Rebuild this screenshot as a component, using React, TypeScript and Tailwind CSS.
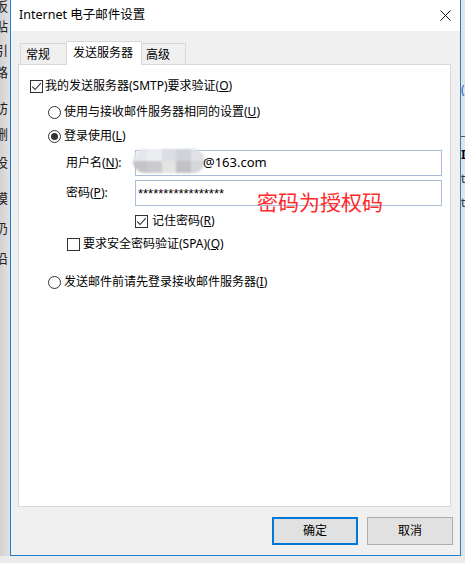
import React from 'react'

const ui = "font-['Noto_Sans','Noto_Sans_CJK_SC',sans-serif]"

const Check = ({ checked }: { checked?: boolean }) => (
  <span className="w-[13px] h-[13px] border border-[#333] bg-white flex items-center justify-center shrink-0">
    {checked && (
      <svg width="11" height="11" viewBox="0 0 11 11">
        <path d="M1.2 5.6 L4.1 8.5 L9.8 2.2" fill="none" stroke="#333" strokeWidth="1.1" />
      </svg>
    )}
  </span>
)

const Radio = ({ on }: { on?: boolean }) => (
  <span className="w-[13px] h-[13px] rounded-full border border-[#333] bg-white flex items-center justify-center shrink-0">
    {on && <span className="w-[7px] h-[7px] rounded-full bg-[#333]" />}
  </span>
)

// bits of the window behind the dialog
const leftBits = [
  ['扳', 12, 0],
  ['贴', 14, 8],
  ['引', 14, 10],
  ['路', 16, 8],
  ['纺', 14, 20],
  ['删', 14, 12],
  ['设', 14, 14],
  ['模', 14, 22],
  ['扔', 14, 16],
  ['沿', 14, 16],
  [']', 14, 50],
]

const App = () => {
  return (
    <div className={`w-[465px] h-[563px] bg-[#ebebeb] flex overflow-hidden text-[#000] ${ui}`}>
      <div className="w-[10px] h-[556px] bg-gradient-to-r from-[#d2d2d2] to-[#e2e2e2] flex flex-col overflow-hidden">
        {leftBits.map(([c, h, m], i) => (
          <div
            key={i}
            className="text-[13px] leading-none text-[#222] -ml-[5px] whitespace-nowrap"
            style={{ height: Number(h), marginTop: Number(m) }}
          >
            {c}
          </div>
        ))}
      </div>

      {/* dialog */}
      <div className="w-[451px] h-[556px] border-x border-b border-[#1a82d6] bg-[#f0f0f0] flex flex-col shrink-0">
        <div className="h-[31px] bg-white flex items-center pl-[8px] shrink-0">
          <span className="text-[12.5px]">Internet 电子邮件设置</span>
          <svg className="ml-auto mr-[9px]" width="11" height="11" viewBox="0 0 11 11">
            <path d="M0.5 0.5 L10.5 10.5 M10.5 0.5 L0.5 10.5" stroke="#111" strokeWidth="1" />
          </svg>
        </div>

        <div className="flex flex-col pl-[7px] pr-[9px] pt-[10px]">
          <div className="flex items-end h-[24px] ml-[2px] -mb-px relative z-10 text-[12px]">
            <div className="w-[46px] h-[22px] border border-r-0 border-b-0 border-[#d9d9d9] pl-[5px] flex items-center">
              常规
            </div>
            <div className="w-[76px] h-[24px] border border-b-0 border-[#d9d9d9] bg-white pl-[6px] pb-[2px] flex items-center">
              发送服务器
            </div>
            <div className="w-[44px] h-[22px] border border-l-0 border-b-0 border-[#d9d9d9] pl-[4px] flex items-center">
              高级
            </div>
          </div>

          <div className="h-[443px] border border-[#d9d9d9] bg-white relative flex flex-col text-[12px]">
            <div className="mt-[11px] h-[20px] pl-[11px] flex items-center gap-[2px]">
              <Check checked />
              <span>我的发送服务器(SMTP)要求验证(<u>O</u>)</span>
            </div>
            <div className="mt-[6px] h-[20px] pl-[29px] flex items-center gap-[3px]">
              <Radio />
              <span>使用与接收邮件服务器相同的设置(<u>U</u>)</span>
            </div>
            <div className="mt-[4px] h-[20px] pl-[29px] flex items-center gap-[3px]">
              <Radio on />
              <span>登录使用(<u>L</u>)</span>
            </div>
            <div className="mt-[4px] h-[26px] pl-[47px] flex items-center">
              <span className="w-[69px]">用户名(<u>N</u>):</span>
              <div className="w-[307px] h-[26px] border border-[#a9bdd8] relative flex items-center pl-[67px] text-[13px]">
                <div className="absolute left-[-3px] top-[-2px] w-[72px] h-[24px] rounded-full overflow-hidden grid grid-cols-5 grid-rows-2 blur-[1px]">
                  <div className="bg-[#e4e7ec]" />
                  <div className="bg-[#eceef2]" />
                  <div className="bg-[#dcdee3]" />
                  <div className="bg-[#d0d3d9]" />
                  <div className="bg-[#dfe1e6]" />
                  <div className="bg-[#c4c4c7]" />
                  <div className="bg-[#cbcbcd]" />
                  <div className="bg-[#e4e4e4]" />
                  <div className="bg-[#c2c2c5]" />
                  <div className="bg-[#d6d7da]" />
                </div>
                <span className="relative">@163.com</span>
              </div>
            </div>
            <div className="mt-[4px] h-[26px] pl-[47px] flex items-center">
              <span className="w-[69px]">密码(<u>P</u>):</span>
              <div className="w-[307px] h-[26px] border border-[#a9bdd8] flex items-center pl-[2px] pt-[2px] font-['Liberation_Sans',sans-serif] text-[13px]">
                *****************
              </div>
            </div>
            <div className="mt-[5px] h-[20px] pl-[116px] flex items-center gap-[4px]">
              <Check checked />
              <span>记住密码(<u>R</u>)</span>
            </div>
            <div className="mt-[3px] h-[20px] pl-[48px] flex items-center gap-[3px]">
              <Check />
              <span>要求安全密码验证(SPA)(<u>Q</u>)</span>
            </div>
            <div className="mt-[18px] h-[20px] pl-[29px] flex items-center gap-[3px]">
              <Radio />
              <span>发送邮件前请先登录接收邮件服务器(<u>I</u>)</span>
            </div>

            <div className="absolute left-[238px] top-[127px] text-[21px] leading-none text-[#ff2a2a]">
              密码为授权码
            </div>
          </div>

          <div className="mt-[10px] -mr-[2px] flex justify-end gap-[9px] text-[12px]">
            <button className="w-[86px] h-[28px] border-2 border-[#0078d7] bg-[#e1e1e1]">确定</button>
            <button className="w-[86px] h-[28px] border border-[#adadad] bg-[#e1e1e1]">取消</button>
          </div>
        </div>
      </div>

      <div className="flex-1 h-[556px] bg-[#e4e4e4] flex flex-col overflow-hidden text-[12px] leading-none">
        <div className="mt-[84px] h-[12px] text-[#2a5aa8] whitespace-nowrap">(</div>
        <div className="mt-[40px] h-px bg-[#555]" />
        <div className="mt-[12px] h-[12px] font-bold whitespace-nowrap">I:</div>
        <div className="mt-[12px] h-[12px] text-[#333] whitespace-nowrap">t</div>
        <div className="mt-[12px] h-[12px] text-[#333] whitespace-nowrap">t</div>
      </div>
    </div>
  )
}

export default App
